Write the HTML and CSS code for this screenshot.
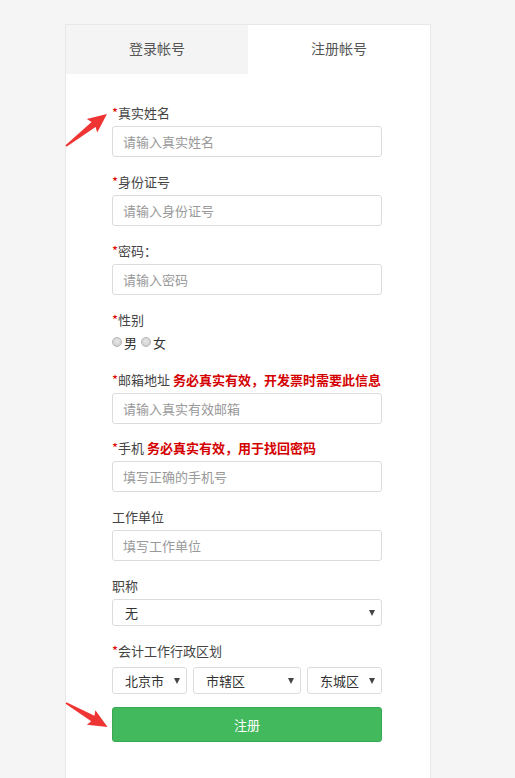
FILE: index.html
```html
<!DOCTYPE html>
<html lang="zh-CN">
<head>
    <meta charset="UTF-8">
    <meta name="viewport" content="width=device-width, initial-scale=1.0">
    <title>注册帐号</title>
    <link rel="stylesheet" href="styles.css">
</head>
<body>
    <div class="panel">
        <div class="tabs">
            <div class="tab">登录帐号</div>
            <div class="tab active">注册帐号</div>
        </div>

        <form class="reg-form">
            <div class="field">
                <label><span class="req">*</span>真实姓名</label>
                <input type="text" placeholder="请输入真实姓名">
            </div>
            <div class="field">
                <label><span class="req">*</span>身份证号</label>
                <input type="text" placeholder="请输入身份证号">
            </div>
            <div class="field">
                <label><span class="req">*</span>密码：</label>
                <input type="password" placeholder="请输入密码">
            </div>
            <div class="field field-gender">
                <label><span class="req">*</span>性别</label>
                <div class="radios">
                    <span class="radio"></span>男
                    <span class="radio"></span>女
                </div>
            </div>
            <div class="field field-tight">
                <label><span class="req">*</span>邮箱地址 <b class="hint">务必真实有效，开发票时需要此信息</b></label>
                <input type="text" placeholder="请输入真实有效邮箱">
            </div>
            <div class="field">
                <label><span class="req">*</span>手机 <b class="hint">务必真实有效，用于找回密码</b></label>
                <input type="text" placeholder="填写正确的手机号">
            </div>
            <div class="field">
                <label>工作单位</label>
                <input type="text" placeholder="填写工作单位">
            </div>
            <div class="field">
                <label>职称</label>
                <div class="select">无<i class="caret"></i></div>
            </div>
            <div class="field">
                <label><span class="req">*</span>会计工作行政区划</label>
                <div class="area">
                    <div class="select sel-city">北京市<i class="caret"></i></div>
                    <div class="select sel-district">市辖区<i class="caret"></i></div>
                    <div class="select sel-town">东城区<i class="caret"></i></div>
                </div>
            </div>
            <button type="button" class="btn-submit">注册</button>
        </form>
    </div>

    <svg class="arrows" width="515" height="778" viewBox="0 0 515 778">
        <g transform="translate(66,146) rotate(-38)">
            <polygon points="0,-0.8 35,-3.2 33,-8.5 52,0 33,8.5 35,3.2 0,0.8" fill="#ef3434"/>
        </g>
        <g transform="translate(66,703) rotate(30)">
            <polygon points="0,-0.8 31,-3.2 29,-8.5 48,0 29,8.5 31,3.2 0,0.8" fill="#ef3434"/>
        </g>
    </svg>
</body>
</html>
```

FILE: styles.css
```css
body {
    margin: 0;
    padding-top: 24px;
    background-color: #f5f5f5;
    font-family: "Noto Sans CJK SC", "Microsoft YaHei", sans-serif;
    font-size: 13px;
    color: #444;
}
.panel {
    width: 366px;
    margin-left: 65px;
    background-color: #fff;
    border: 1px solid #e8e8e8;
    border-bottom: none;
    box-sizing: border-box;
    min-height: 760px;
}
.tabs {
    display: flex;
    height: 49px;
}
.tab {
    flex: 1;
    display: flex;
    align-items: center;
    justify-content: center;
    padding-bottom: 3px;
    box-sizing: border-box;
    font-size: 14px;
    color: #555;
    background-color: #f4f4f4;
}
.tab.active {
    background-color: #fff;
}
.reg-form {
    padding: 29px 0 40px 46px;
}
.field {
    margin-bottom: 15px;
}
.field-tight {
    margin-bottom: 14px;
}
.field label {
    display: block;
    line-height: 20px;
    margin-bottom: 3px;
}
.req {
    color: #d00;
}
.hint {
    color: #d40000;
    font-weight: bold;
}
.field input {
    display: block;
    width: 270px;
    height: 31px;
    box-sizing: border-box;
    border: 1px solid #dcdcdc;
    border-radius: 3px;
    padding: 0 10px;
    font-family: inherit;
    font-size: 13px;
    color: #333;
    outline: none;
}
.field input::placeholder {
    color: #999;
}
.field-gender {
    margin-bottom: 19px;
}
.radios {
    display: flex;
    align-items: center;
    height: 18px;
    color: #333;
}
.radio {
    width: 8px;
    height: 8px;
    border: 1px solid #b5b5b5;
    border-radius: 50%;
    background: radial-gradient(circle at 50% 40%, #e8e8e8, #c8c8c8);
    margin: 0 2px 0 0;
}
.radios .radio:nth-of-type(2) {
    margin-left: 4px;
}
.select {
    display: flex;
    align-items: center;
    justify-content: space-between;
    height: 27px;
    box-sizing: border-box;
    border: 1px solid #dcdcdc;
    border-radius: 3px;
    padding: 0 6px 0 12px;
    color: #333;
    width: 270px;
}
.caret {
    width: 0;
    height: 0;
    border-left: 3.5px solid transparent;
    border-right: 3.5px solid transparent;
    border-top: 6px solid #444;
}
.field label + .area {
    margin-top: 6px;
}
.area {
    display: flex;
    gap: 6px;
    width: 270px;
}
.sel-city {
    width: 75px;
}
.sel-district {
    width: 108px;
}
.sel-town {
    width: 75px;
}
.btn-submit {
    display: block;
    width: 270px;
    height: 35px;
    margin-top: -2px;
    border: 1px solid #38a852;
    border-radius: 3px;
    background-color: #42b95c;
    color: #fff;
    font-family: inherit;
    font-size: 13px;
}
.arrows {
    position: absolute;
    left: 0;
    top: 0;
    pointer-events: none;
}
```
